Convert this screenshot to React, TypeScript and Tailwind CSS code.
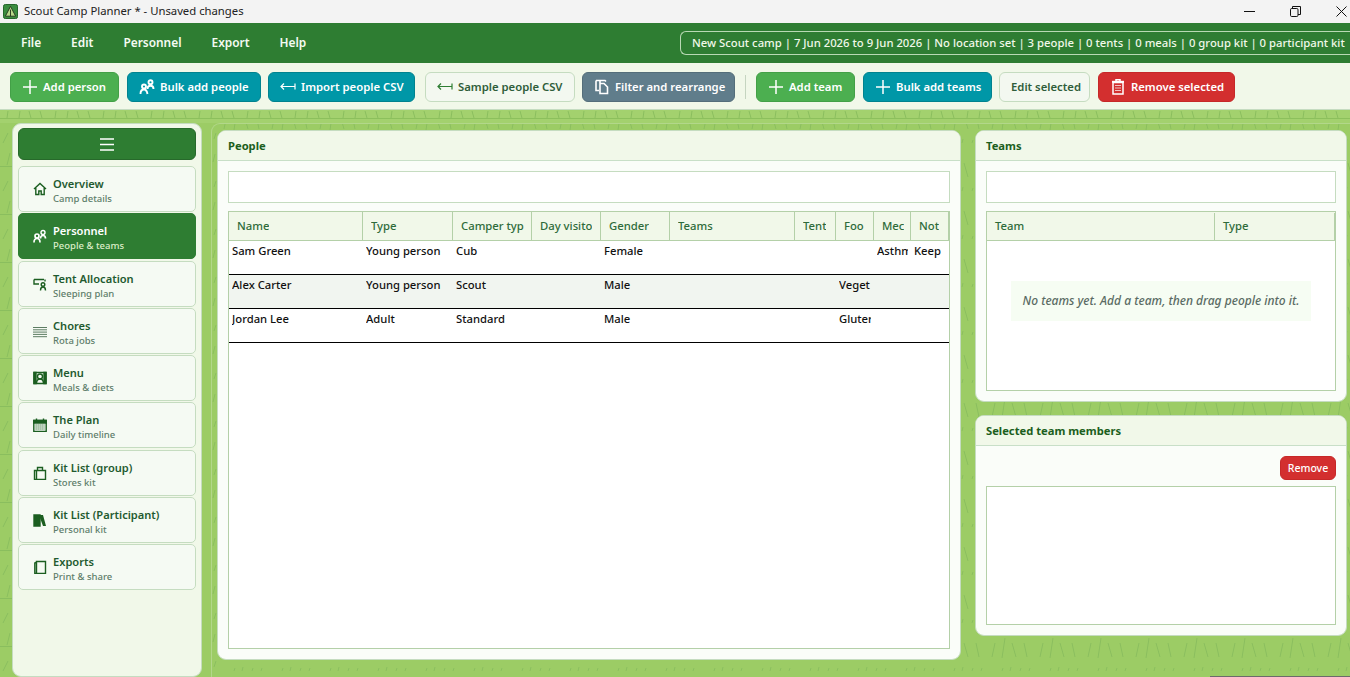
import React from "react";

const D = "#1b5e20";

type IconProps = { c?: string };

const Plus = ({ c = "#fff" }: IconProps) => (
  <svg width="16" height="16" viewBox="0 0 16 16" fill="none" stroke={c} strokeWidth="1.5"><path d="M8 1v14M1 8h14" /></svg>
);
const People = ({ c = "#fff" }: IconProps) => (
  <svg width="16" height="16" viewBox="0 0 16 16" fill="none" stroke={c} strokeWidth="1.9">
    <circle cx="11.500" cy="3.200" r="2" />
    <path d="M8.500 10c0-2 1-3.200 3-3.200s3 1.200 3 3.200" />
    <circle cx="5" cy="7.500" r="2" />
    <path d="M1.500 15c0-3 1-4.500 3.500-4.500s3 1.500 3.500 4.500" />
  </svg>
);
const Arrow = ({ c = "#fff" }: IconProps) => (
  <svg width="16" height="10" viewBox="0 0 16 10" fill="none" stroke={c} strokeWidth="1.2"><path d="M15 1.500v6M15 4.500H1M4 1.500l-3 3 3 3" /></svg>
);
const Copy = ({ c = "#fff" }: IconProps) => (
  <svg width="16" height="16" viewBox="0 0 16 16" fill="none" stroke={c} strokeWidth="1.6"><path d="M6 4V1.500h5l1 1M2 1.500h4M2 1.500v10h3" /><path d="M6 4.500h4l3.500 3.500v6.500H6z" /></svg>
);
const Trash = () => (
  <svg width="16" height="16" viewBox="0 0 16 16" fill="none" stroke="#fff" strokeWidth="1.5"><path d="M3 3.500h10V15H3z" /><path d="M2 2.800h12" strokeWidth="2" /><path d="M6 2V.800h4V2" /><path d="M5 6.500h6M5 9h6M5 11.500h6" strokeWidth="1" opacity=".7" /></svg>
);

const NavIcon = ({ k, c = D }: { k: string; c?: string }) => {
  const p = { fill: "none", stroke: c, strokeWidth: 1.4 };
  return (
    <svg width="14" height="14" viewBox="0 0 14 14" {...p} className="shrink-0">
      {k === "home" && <path d="M1 7 7 1.500 13 7M2.800 6v6.500h3V9h2.400v3.500h3V6" />}
      {k === "people" && (<><circle cx="10" cy="3.500" r="2" /><path d="M7.500 9.500c0-2 1-3 2.500-3s2.500 1 2.500 3" strokeWidth="1.700" /><circle cx="4" cy="7" r="2" strokeWidth="1.700" /><path d="M1 13.500c0-2.500 1-4 3-4s3 1.500 3 4" strokeWidth="1.700" /></>)}
      {k === "tent" && (<><path d="M1 2.500h10M1 2.500v4.500h5M12 2.500v2" /><circle cx="10" cy="7.500" r="1.800" /><path d="M7.500 13.500c0-2.500 1-3.500 2.500-3.500s2.500 1 2.500 3.500" /></>)}
      {k === "list" && <path d="M0 3.500h14M0 5.800h14M0 8.100h14M0 10.400h14M0 12.700h14" strokeWidth="1" stroke="#5d7d63" />}
      {k === "menu" && (<><path d="M1 1.500h12v11H1z" /><circle cx="7" cy="5.500" r="2.500" /><path d="M3.500 12.500c0-3 1-4.500 3.500-4.500s3.500 1.500 3.500 4.500" /><path d="M1 1.500h2v11H1zM11 1.500h2v11h-2z" fill={c} /></>)}
      {k === "cal" && (<><path d="M.8 2.500h12.400v11H.8z" /><path d="M.8 2.500h12.400v2.500H.8z" fill={c} /><path d="M3.500 .5v2M10.500 .5v2" /><path d="M2.500 7h9M2.500 9h9M2.500 11h9" strokeWidth="1.100" strokeDasharray="1.200 .8" /></>)}
      {k === "bag" && <path d="M1.500 4.500h11v9h-11zM3.500 4.500v9M4.500 4.500V1.500h5v3" />}
      {k === "book" && (<><path d="M1 2h6v11H1z" fill={c} /><path d="M7 2h3l3 11h-3L7 5z" fill={c} stroke="none" /></>)}
      {k === "page" && <path d="M3.500 1.500h9v12h-9zM3.500 2 1.800 3v10.500h1.700" />}
    </svg>
  );
};

const Btn = ({ cls, icon, children, light }: { cls: string; icon?: React.ReactNode; children: React.ReactNode; light?: boolean }) => (
  <div className={`h-[30px] rounded-[6px] border flex items-center gap-[5px] pl-[11px] shrink-0 whitespace-nowrap text-[11.300px] font-semibold ${cls} ${light ? "text-[#2f5d3a]" : "text-white"}`}>
    {icon}
    <span className="pt-[1px]">{children}</span>
  </div>
);

const nav: [string, string, string][] = [
  ["home", "Overview", "Camp details"],
  ["people", "Personnel", "People & teams"],
  ["tent", "Tent Allocation", "Sleeping plan"],
  ["list", "Chores", "Rota jobs"],
  ["menu", "Menu", "Meals & diets"],
  ["cal", "The Plan", "Daily timeline"],
  ["bag", "Kit List (group)", "Stores kit"],
  ["book", "Kit List (Participant)", "Personal kit"],
  ["page", "Exports", "Print & share"],
];

const peopleCols: [string, string][] = [
  ["Name", "w-[134px]"], ["Type", "w-[90px]"], ["Camper typ", "w-[79px]"], ["Day visito", "w-[69px]"],
  ["Gender", "w-[69px]"], ["Teams", "w-[125px]"], ["Tent", "w-[41px]"], ["Foo", "w-[38px]"], ["Mec", "w-[37px]"], ["Not", "w-[38px]"],
];

const rows: { c: string[]; bg: string }[] = [
  { c: ["Sam Green", "Young person", "Cub", "", "Female", "", "", "", "Asthm", "Keep"], bg: "bg-white" },
  { c: ["Alex Carter", "Young person", "Scout", "", "Male", "", "", "Veget", "", ""], bg: "bg-[#f1f5f0]" },
  { c: ["Jordan Lee", "Adult", "Standard", "", "Male", "", "", "Gluter", "", ""], bg: "bg-white" },
];
const cellW = ["w-[134px]", "w-[90px]", "w-[79px]", "w-[69px]", "w-[69px]", "w-[125px]", "w-[41px]", "w-[38px]", "w-[37px]", "w-[38px]"];

const PanelHead = ({ children }: { children: React.ReactNode }) => (
  <div className="h-[30px] shrink-0 bg-[#f1f8e9] border-b border-[#c8dfc8] flex items-center pt-[1px] px-[10px] text-[11.200px] font-bold text-[#1b5e20]">{children}</div>
);

const Panel = ({ className, children }: { className: string; children: React.ReactNode }) => (
  <section className={`relative bg-[#fafdf9] border border-[#c5dcc0] rounded-[9px] overflow-hidden flex flex-col ${className}`}>{children}</section>
);

const Grass = () => (
  <svg className="absolute inset-0 w-full h-full" aria-hidden="true">
    <defs>
      <pattern id="grassMain" width="48" height="48" patternUnits="userSpaceOnUse" y="-27">
        <path d="M4 19l4 14M16 19l3 14M35 19l-3 14M45 14l-3 20M3 43l-1 4M13 44l-1 3M22 44l-1 3M43 44l-1 3" stroke="#8abe5e" strokeWidth="1" fill="none" />
      </pattern>
      <pattern id="grassLeft" width="48" height="48" patternUnits="userSpaceOnUse" y="-27">
        <path d="M8 37l-5 10M10 9l-3 12M0 22.500h12" stroke="#8abe5e" strokeWidth="1" fill="none" />
      </pattern>
      <pattern id="grassStrip" x="211" width="7" height="48" patternUnits="userSpaceOnUse" y="-27">
        <path d="M5 37l-2 6M4 10l-2 8" stroke="#8abe5e" strokeWidth="1" fill="none" />
      </pattern>
    </defs>
    <rect x="0" y="0" width="12" height="100%" fill="url(#grassLeft)" />
    <rect x="211" y="0" width="7" height="100%" fill="url(#grassStrip)" />
    <rect x="218" y="0" width="1132" height="100%" fill="url(#grassMain)" />
  </svg>
);

const Band = () => (
  <svg className="absolute inset-0 w-full h-full" aria-hidden="true">
    <defs>
      <pattern id="grassBand" width="48" height="13" patternUnits="userSpaceOnUse">
        <path d="M8 1 7 8M20 1l-1 7M29 1l2 7M40 1l2 7" stroke="#8abe5e" strokeWidth="1" fill="none" />
      </pattern>
    </defs>
    <rect width="100%" height="100%" fill="url(#grassBand)" />
  </svg>
);

export default function App() {
  return (
    <div className="relative w-[1350px] h-[677px] overflow-hidden flex flex-col bg-[#9ccc65]" style={{ fontFamily: '"Noto Sans", "Open Sans", sans-serif' }}>
      <div className="h-[23px] shrink-0 bg-[#f3f3f3] flex items-center pl-[3px]">
        <svg width="15" height="15" viewBox="0 0 16 16" className="mr-[6px]">
          <rect x=".5" y=".5" width="15" height="15" rx="2" fill="#3b8c3f" stroke="#1b5e20" />
          <path d="M8 2.500 2.500 13h11z" fill="#b8d98a" stroke="#24361f" />
          <path d="M8 6v7" stroke="#24361f" />
        </svg>
        <span className="text-[11.300px] text-[#222]">Scout Camp Planner * - Unsaved changes</span>
        <div className="ml-auto flex items-center pr-[3px] gap-[35px]">
          <svg width="11" height="11" viewBox="0 0 11 11" stroke="#111" fill="none"><path d="M0 5.500h11" /></svg>
          <svg width="11" height="11" viewBox="0 0 11 11" stroke="#111" fill="none"><rect x=".5" y="2.500" width="7.500" height="8" rx="1.200" /><path d="M2.500 2.500V.5h8v8H8" /></svg>
          <svg width="11" height="11" viewBox="0 0 11 11" stroke="#111" fill="none"><path d="m.5.5 10 10M10.500.5l-10 10" /></svg>
        </div>
      </div>

      <header className="h-[40px] shrink-0 bg-[#2e7d32] flex items-center text-[#f5fbf2] font-semibold">
        <div className="flex pl-[21px] gap-[30px] text-[11.900px]">
          <span>File</span><span>Edit</span><span>Personnel</span><span>Export</span><span>Help</span>
        </div>
        <div className="ml-auto h-[24px] w-[670px] shrink-0 border border-r-0 border-[#b9d9b4] rounded-l-[6px] flex items-center pl-[11px] whitespace-nowrap text-[11.300px] text-[#f1f8e9] font-medium">
          New Scout camp | 7 Jun 2026 to 9 Jun 2026 | No location set | 3 people | 0 tents | 0 meals | 0 group kit | 0 participant kit
        </div>
      </header>

      <div className="h-[47px] shrink-0 bg-[#f1f8e9] border-b border-[#c5dcc0] flex items-center pl-[10px] pt-[1px] gap-[7px]">
        <Btn cls="w-[109px] mr-[1px] bg-[#4caf50] border-[#43a047]" icon={<Plus />}>Add person</Btn>
        <Btn cls="w-[134px] bg-[#0097a7] border-[#00838f]" icon={<People />}>Bulk add people</Btn>
        <Btn cls="w-[147px] mr-[3px] bg-[#0097a7] border-[#00838f]" icon={<Arrow />}>Import people CSV</Btn>
        <Btn cls="w-[150px] bg-[#f3f8f0] border-[#c5dcc0]" icon={<Arrow c="#2e7d32" />} light>Sample people CSV</Btn>
        <Btn cls="w-[153px] bg-[#607d8b] border-[#546e7a]" icon={<Copy />}>Filter and rearrange</Btn>
        <div className="w-px h-[24px] bg-[#c5d5c0] mx-[3px] shrink-0" />
        <Btn cls="w-[99px] mr-[1px] bg-[#4caf50] border-[#43a047]" icon={<Plus />}>Add team</Btn>
        <Btn cls="w-[129px] bg-[#0097a7] border-[#00838f]" icon={<Plus />}>Bulk add teams</Btn>
        <Btn cls="w-[91px] mr-[1px] bg-[#f3f8f0] border-[#c5dcc0]" light>Edit selected</Btn>
        <Btn cls="w-[137px] bg-[#d32f2f] border-[#c62828]" icon={<Trash />}>Remove selected</Btn>
      </div>

      <div className="relative h-[13px] shrink-0 bg-[#a3d16e]">
        <Band />
        <div className="absolute left-0 right-0 top-[8px] h-px bg-[#8cc05c]" />
      </div>

      <main className="relative flex-1 min-h-0 flex items-start pl-[12px]">
        <Grass />
        <aside className="relative w-[190px] h-[554px] shrink-0 bg-[#f1f8e9] border border-[#c5dcc0] rounded-[9px] px-[5px] pt-[4px] flex flex-col overflow-hidden">
          <div className="h-[32px] shrink-0 rounded-[6px] bg-[#2e7d32] border border-[#27692b] flex items-center justify-center">
            <svg width="14" height="13" viewBox="0 0 14 13" stroke="#fff" strokeWidth="1.400"><path d="M0 1h14M0 6.500h14M0 12h14" /></svg>
          </div>
          <nav className="h-[424px] overflow-hidden flex flex-col gap-[1.300px] mt-[6px] shrink-0">
            {nav.map(([k, t, s]) => {
              const active = t === "Personnel";
              return (
                <div key={t} className={`h-[46px] shrink-0 rounded-[5px] border flex items-center pl-[14px] gap-[6px] ${active ? "bg-[#2e7d32] border-[#2e7d32]" : "bg-[#f5faf3] border-[#c5dcc0]"}`}>
                  <NavIcon k={k} c={active ? "#fff" : D} />
                  <div className="flex flex-col pt-[3px]">
                    <span className={`text-[11.100px] font-semibold leading-[16px] ${active ? "text-white" : "text-[#1f5a30]"}`}>{t}</span>
                    <span className={`text-[9.500px] font-medium leading-[13px] ${active ? "text-[#dcedc8]" : "text-[#5d7d6a]"}`}>{s}</span>
                  </div>
                </div>
              );
            })}
          </nav>
        </aside>

        <div className="relative ml-[9px] flex-1 h-full border-l border-t border-[#b2d78a] rounded-tl-[9px] flex items-start pl-[5px] pt-[6px]">
          <Panel className="w-[744px] h-[530px] shrink-0">
            <PanelHead>People</PanelHead>
            <div className="flex-1 min-h-0 flex flex-col px-[10px] pt-[10px] pb-[10px]">
              <div className="h-[32px] shrink-0 bg-white border border-[#c5dcc0]" />
              <div className="flex-1 min-h-0 mt-[8px] bg-white border border-[#b4d0a8]">
                <div className="flex h-[29px] bg-[#f1f8e9] border-b border-[#b4d0a8]">
                  {peopleCols.map(([t, w]) => (
                    <div key={t} className={`${w} shrink-0 border-r border-[#b4d0a8] flex items-center pl-[8px] pr-[6px] pt-[1px] text-[11.300px] font-medium text-[#2e6b3a]`}>
                      <span className="block overflow-hidden whitespace-nowrap">{t}</span>
                    </div>
                  ))}
                </div>
                {rows.map((r) => (
                  <div key={r.c[0]} className={`flex h-[34px] border-b border-black ${r.bg}`}>
                    {r.c.map((v, i) => (
                      <div key={i} className={`${cellW[i]} shrink-0 pl-[3px] pr-[3px] pt-[1px] text-[11.250px] leading-[17px] font-medium text-[#111]`}>
                        <span className="block overflow-hidden whitespace-nowrap">{v}</span>
                      </div>
                    ))}
                  </div>
                ))}
              </div>
            </div>
          </Panel>

          <div className="ml-[14px] w-[372px] shrink-0 flex flex-col gap-[13px]">
            <Panel className="h-[272px]">
              <PanelHead>Teams</PanelHead>
              <div className="flex-1 min-h-0 flex flex-col px-[10px] pt-[10px] pb-[10px]">
                <div className="h-[32px] shrink-0 bg-white border border-[#c5dcc0]" />
                <div className="flex-1 min-h-0 mt-[8px] bg-white border border-[#b4d0a8] flex flex-col">
                  <div className="flex h-[29px] shrink-0 bg-[#f1f8e9] border-b border-[#b4d0a8] pt-[1px] text-[11.300px] font-medium text-[#2e6b3a]">
                    <div className="w-[228px] border-r border-[#b4d0a8] flex items-center pl-[8px]">Team</div>
                    <div className="flex-1 border-r border-[#b4d0a8] flex items-center pl-[8px]">Type</div>
                  </div>
                  <div className="flex-1 flex items-start justify-center pt-[40px]">
                    <div className="w-[300px] h-[40px] bg-[#f6fdf3] flex items-center justify-center italic font-medium text-[12px] text-[#5a6b63] whitespace-nowrap">No teams yet. Add a team, then drag people into it.</div>
                  </div>
                </div>
              </div>
            </Panel>
            <Panel className="h-[221px]">
              <PanelHead>Selected team members</PanelHead>
              <div className="flex-1 min-h-0 flex flex-col px-[10px] pt-[10px] pb-[10px]">
                <div className="self-end w-[56px] h-[24px] shrink-0 rounded-[6px] bg-[#d32f2f] border border-[#c62828] flex items-center justify-center pt-[2px] text-white font-medium text-[10.500px]">Remove</div>
                <div className="flex-1 mt-[6px] bg-white border border-[#b4d0a8]" />
              </div>
            </Panel>
          </div>
        </div>
      </main>
      <div className="absolute right-0 bottom-0 w-[140px] h-px bg-[#6b6b6b]" />
    </div>
  );
}
